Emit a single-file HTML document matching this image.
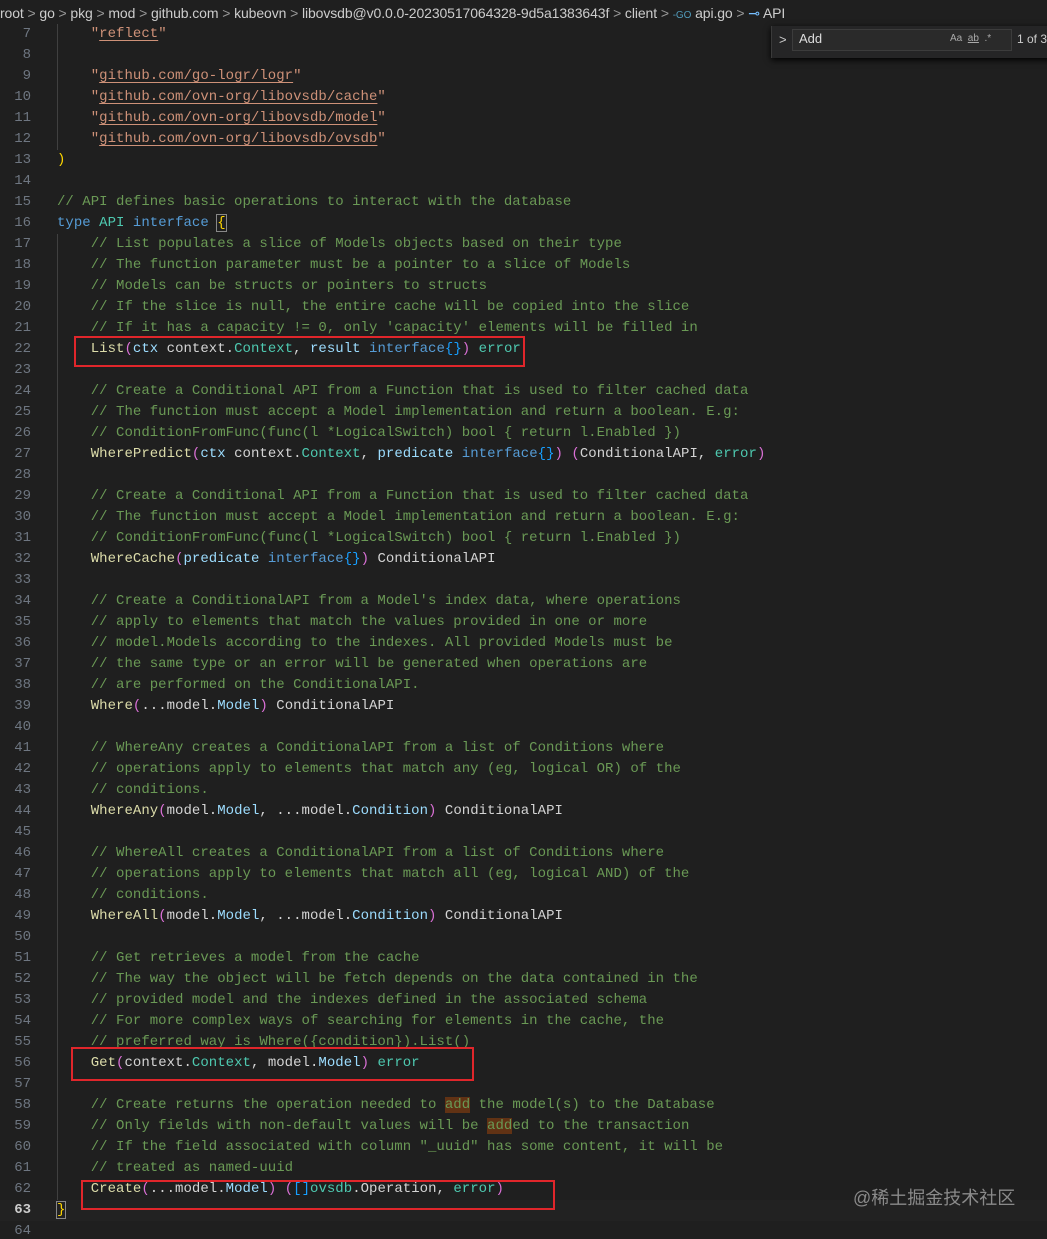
<!DOCTYPE html>
<html><head><meta charset="utf-8"><style>
html,body{margin:0;padding:0;background:#1f1f1f;width:1047px;height:1239px;overflow:hidden}
body{position:relative;font-family:"Liberation Mono","DejaVu Sans Mono",monospace;font-size:14px;color:#d4d4d4}
.bc{position:absolute;left:0;top:3px;height:20px;font-family:"Liberation Sans",sans-serif;font-size:14px;color:#cccccc;white-space:pre;line-height:20px;letter-spacing:-0.1px}
.bc .sep{color:#999}
#w{position:absolute;left:0;top:2px;width:1047px;height:1239px}
.l{position:absolute;left:0;height:21px;line-height:21px;width:1047px;white-space:pre}
.n{position:absolute;left:0;width:31px;text-align:right;color:#6e7681}
.code{position:absolute;left:57px;letter-spacing:0.03px}
.c{color:#6a9955}.s{color:#ce9178}.k{color:#569cd6}.t{color:#4ec9b0}.f{color:#dcdcaa}.p{color:#9cdcfe}
.y{color:#ffd700}.m{color:#da70d6}.b{color:#179fff}
.u{text-decoration:underline;text-underline-offset:3px}
.g{position:absolute;left:57px;width:1px;background:#404040}
.box{position:absolute;border:2px solid #e0262b;box-sizing:border-box}
.hl{background:#613214}
</style></head><body>
<div class="bc">root <span class="sep">&gt;</span> go <span class="sep">&gt;</span> pkg <span class="sep">&gt;</span> mod <span class="sep">&gt;</span> github.com <span class="sep">&gt;</span> kubeovn <span class="sep">&gt;</span> libovsdb@v0.0.0-20230517064328-9d5a1383643f <span class="sep">&gt;</span> client <span class="sep">&gt;</span> <span style="color:#519aba;font-size:10px">-GO</span> api.go <span class="sep">&gt;</span> <span style="color:#75beff">⊸</span> API</div>
<div id="w">
<div class="g" style="top:22px;height:126px"></div>
<div class="g" style="top:232px;height:966px"></div>

<div class="l" style="top:22px"><span class="n">7</span><span class="code">    <span class="s">"<span class="u">reflect</span>"</span></span></div>
<div class="l" style="top:43px"><span class="n">8</span></div>
<div class="l" style="top:64px"><span class="n">9</span><span class="code">    <span class="s">"<span class="u">github.com/go-logr/logr</span>"</span></span></div>
<div class="l" style="top:85px"><span class="n">10</span><span class="code">    <span class="s">"<span class="u">github.com/ovn-org/libovsdb/cache</span>"</span></span></div>
<div class="l" style="top:106px"><span class="n">11</span><span class="code">    <span class="s">"<span class="u">github.com/ovn-org/libovsdb/model</span>"</span></span></div>
<div class="l" style="top:127px"><span class="n">12</span><span class="code">    <span class="s">"<span class="u">github.com/ovn-org/libovsdb/ovsdb</span>"</span></span></div>
<div class="l" style="top:148px"><span class="n">13</span><span class="code"><span class="y">)</span></span></div>
<div class="l" style="top:169px"><span class="n">14</span></div>
<div class="l" style="top:190px"><span class="n">15</span><span class="code"><span class="c">// API defines basic operations to interact with the database</span></span></div>
<div class="l" style="top:211px"><span class="n">16</span><span class="code"><span class="k">type</span> <span class="t">API</span> <span class="k">interface</span> <span class="y" style="outline:1px solid #888">{</span></span></div>
<div class="l" style="top:232px"><span class="n">17</span><span class="code">    <span class="c">// List populates a slice of Models objects based on their type</span></span></div>
<div class="l" style="top:253px"><span class="n">18</span><span class="code">    <span class="c">// The function parameter must be a pointer to a slice of Models</span></span></div>
<div class="l" style="top:274px"><span class="n">19</span><span class="code">    <span class="c">// Models can be structs or pointers to structs</span></span></div>
<div class="l" style="top:295px"><span class="n">20</span><span class="code">    <span class="c">// If the slice is null, the entire cache will be copied into the slice</span></span></div>
<div class="l" style="top:316px"><span class="n">21</span><span class="code">    <span class="c">// If it has a capacity != 0, only 'capacity' elements will be filled in</span></span></div>
<div class="l" style="top:337px"><span class="n">22</span><span class="code">    <span class="f">List</span><span class="m">(</span><span class="p">ctx</span> context.<span class="t">Context</span>, <span class="p">result</span> <span class="k">interface</span><span class="b">{}</span><span class="m">)</span> <span class="t">error</span></span></div>
<div class="l" style="top:358px"><span class="n">23</span></div>
<div class="l" style="top:379px"><span class="n">24</span><span class="code">    <span class="c">// Create a Conditional API from a Function that is used to filter cached data</span></span></div>
<div class="l" style="top:400px"><span class="n">25</span><span class="code">    <span class="c">// The function must accept a Model implementation and return a boolean. E.g:</span></span></div>
<div class="l" style="top:421px"><span class="n">26</span><span class="code">    <span class="c">// ConditionFromFunc(func(l *LogicalSwitch) bool { return l.Enabled })</span></span></div>
<div class="l" style="top:442px"><span class="n">27</span><span class="code">    <span class="f">WherePredict</span><span class="m">(</span><span class="p">ctx</span> context.<span class="t">Context</span>, <span class="p">predicate</span> <span class="k">interface</span><span class="b">{}</span><span class="m">)</span> <span class="m">(</span>ConditionalAPI, <span class="t">error</span><span class="m">)</span></span></div>
<div class="l" style="top:463px"><span class="n">28</span></div>
<div class="l" style="top:484px"><span class="n">29</span><span class="code">    <span class="c">// Create a Conditional API from a Function that is used to filter cached data</span></span></div>
<div class="l" style="top:505px"><span class="n">30</span><span class="code">    <span class="c">// The function must accept a Model implementation and return a boolean. E.g:</span></span></div>
<div class="l" style="top:526px"><span class="n">31</span><span class="code">    <span class="c">// ConditionFromFunc(func(l *LogicalSwitch) bool { return l.Enabled })</span></span></div>
<div class="l" style="top:547px"><span class="n">32</span><span class="code">    <span class="f">WhereCache</span><span class="m">(</span><span class="p">predicate</span> <span class="k">interface</span><span class="b">{}</span><span class="m">)</span> ConditionalAPI</span></div>
<div class="l" style="top:568px"><span class="n">33</span></div>
<div class="l" style="top:589px"><span class="n">34</span><span class="code">    <span class="c">// Create a ConditionalAPI from a Model's index data, where operations</span></span></div>
<div class="l" style="top:610px"><span class="n">35</span><span class="code">    <span class="c">// apply to elements that match the values provided in one or more</span></span></div>
<div class="l" style="top:631px"><span class="n">36</span><span class="code">    <span class="c">// model.Models according to the indexes. All provided Models must be</span></span></div>
<div class="l" style="top:652px"><span class="n">37</span><span class="code">    <span class="c">// the same type or an error will be generated when operations are</span></span></div>
<div class="l" style="top:673px"><span class="n">38</span><span class="code">    <span class="c">// are performed on the ConditionalAPI.</span></span></div>
<div class="l" style="top:694px"><span class="n">39</span><span class="code">    <span class="f">Where</span><span class="m">(</span>...model.<span class="p">Model</span><span class="m">)</span> ConditionalAPI</span></div>
<div class="l" style="top:715px"><span class="n">40</span></div>
<div class="l" style="top:736px"><span class="n">41</span><span class="code">    <span class="c">// WhereAny creates a ConditionalAPI from a list of Conditions where</span></span></div>
<div class="l" style="top:757px"><span class="n">42</span><span class="code">    <span class="c">// operations apply to elements that match any (eg, logical OR) of the</span></span></div>
<div class="l" style="top:778px"><span class="n">43</span><span class="code">    <span class="c">// conditions.</span></span></div>
<div class="l" style="top:799px"><span class="n">44</span><span class="code">    <span class="f">WhereAny</span><span class="m">(</span>model.<span class="p">Model</span>, ...model.<span class="p">Condition</span><span class="m">)</span> ConditionalAPI</span></div>
<div class="l" style="top:820px"><span class="n">45</span></div>
<div class="l" style="top:841px"><span class="n">46</span><span class="code">    <span class="c">// WhereAll creates a ConditionalAPI from a list of Conditions where</span></span></div>
<div class="l" style="top:862px"><span class="n">47</span><span class="code">    <span class="c">// operations apply to elements that match all (eg, logical AND) of the</span></span></div>
<div class="l" style="top:883px"><span class="n">48</span><span class="code">    <span class="c">// conditions.</span></span></div>
<div class="l" style="top:904px"><span class="n">49</span><span class="code">    <span class="f">WhereAll</span><span class="m">(</span>model.<span class="p">Model</span>, ...model.<span class="p">Condition</span><span class="m">)</span> ConditionalAPI</span></div>
<div class="l" style="top:925px"><span class="n">50</span></div>
<div class="l" style="top:946px"><span class="n">51</span><span class="code">    <span class="c">// Get retrieves a model from the cache</span></span></div>
<div class="l" style="top:967px"><span class="n">52</span><span class="code">    <span class="c">// The way the object will be fetch depends on the data contained in the</span></span></div>
<div class="l" style="top:988px"><span class="n">53</span><span class="code">    <span class="c">// provided model and the indexes defined in the associated schema</span></span></div>
<div class="l" style="top:1009px"><span class="n">54</span><span class="code">    <span class="c">// For more complex ways of searching for elements in the cache, the</span></span></div>
<div class="l" style="top:1030px"><span class="n">55</span><span class="code">    <span class="c">// preferred way is Where({condition}).List()</span></span></div>
<div class="l" style="top:1051px"><span class="n">56</span><span class="code">    <span class="f">Get</span><span class="m">(</span>context.<span class="t">Context</span>, model.<span class="p">Model</span><span class="m">)</span> <span class="t">error</span></span></div>
<div class="l" style="top:1072px"><span class="n">57</span></div>
<div class="l" style="top:1093px"><span class="n">58</span><span class="code">    <span class="c">// Create returns the operation needed to <span class="hl">add</span> the model(s) to the Database</span></span></div>
<div class="l" style="top:1114px"><span class="n">59</span><span class="code">    <span class="c">// Only fields with non-default values will be <span class="hl">add</span>ed to the transaction</span></span></div>
<div class="l" style="top:1135px"><span class="n">60</span><span class="code">    <span class="c">// If the field associated with column "_uuid" has some content, it will be</span></span></div>
<div class="l" style="top:1156px"><span class="n">61</span><span class="code">    <span class="c">// treated as named-uuid</span></span></div>
<div class="l" style="top:1177px"><span class="n">62</span><span class="code">    <span class="f">Create</span><span class="m">(</span>...model.<span class="p">Model</span><span class="m">)</span> <span class="m">(</span><span class="b">[]</span><span class="t">ovsdb</span>.Operation, <span class="t">error</span><span class="m">)</span></span></div>
<div class="l" style="top:1198px;background:#222"><span class="n" style="color:#cccccc;font-weight:bold">63</span><span class="code"><span class="y" style="outline:1px solid #888">}</span></span></div>
<div class="l" style="top:1219px"><span class="n">64</span></div>
</div>
<div class="box" style="left:74px;top:336px;width:451px;height:31px"></div>
<div class="box" style="left:71px;top:1047px;width:403px;height:34px"></div>
<div class="box" style="left:81px;top:1180px;width:474px;height:30px"></div>

<div style="position:absolute;left:771px;top:26px;width:280px;height:32px;background:#252526;box-shadow:0 2px 6px #000;border-left:1px solid #3a3a3a"></div>
<div style="position:absolute;left:779px;top:32px;color:#ccc;font-family:'Liberation Sans',sans-serif;font-size:13px">&gt;</div>
<div style="position:absolute;left:792px;top:29px;width:220px;height:22px;background:#2a2a2a;border:1px solid #3c3c3c;box-sizing:border-box"></div>
<div style="position:absolute;left:799px;top:31px;color:#ddd;font-family:'Liberation Sans',sans-serif;font-size:13px">Add</div>
<div style="position:absolute;left:950px;top:33px;color:#aaa;font-family:'Liberation Sans',sans-serif;font-size:10px;white-space:pre">Aa  <u>ab</u>  .*</div>
<div style="position:absolute;left:1017px;top:32px;color:#ccc;font-family:'Liberation Sans',sans-serif;font-size:12px;white-space:pre">1 of 3</div>

<div style="position:absolute;left:853px;top:1184px;color:#8a8a8a;font-family:'Liberation Sans','Noto Sans CJK SC',sans-serif;font-size:18px">@稀土掘金技术社区</div>
</body></html>
